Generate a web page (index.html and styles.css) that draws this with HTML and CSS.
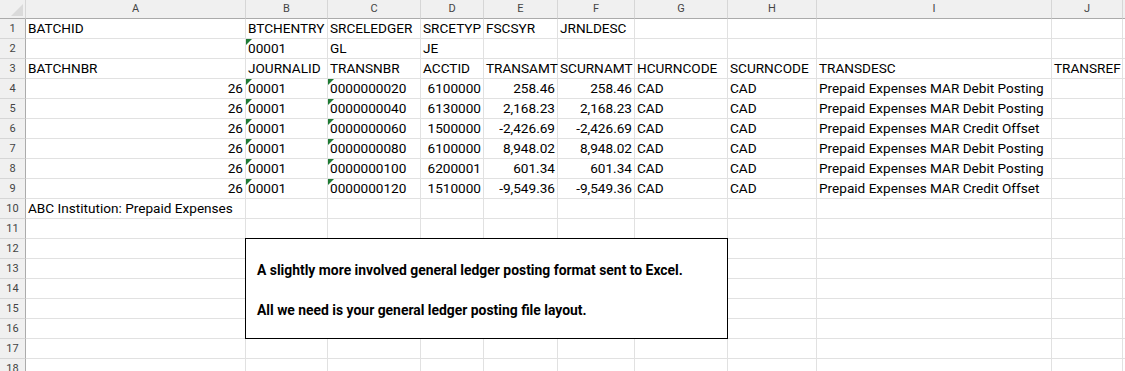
FILE: index.html
```html
<!DOCTYPE html>
<html>
<head>
<meta charset="utf-8">
<link rel="stylesheet" href="styles.css">
</head>
<body>
<div class="sheet">
  <div class="row hdr">
    <div class="corner"><span class="corner-tri"></span></div>
    <div class="ch">A</div><div class="ch">B</div><div class="ch">C</div><div class="ch">D</div><div class="ch">E</div><div class="ch">F</div><div class="ch">G</div><div class="ch">H</div><div class="ch">I</div><div class="ch">J</div><div class="ch"></div>
  </div>
  <div class="row">
    <div class="rh">1</div>
    <div class="c">BATCHID</div><div class="c">BTCHENTRY</div><div class="c">SRCELEDGER</div><div class="c">SRCETYP</div><div class="c">FSCSYR</div><div class="c">JRNLDESC</div><div class="c"></div><div class="c"></div><div class="c"></div><div class="c"></div><div class="c"></div>
  </div>
  <div class="row">
    <div class="rh">2</div>
    <div class="c"></div><div class="c tri">00001</div><div class="c">GL</div><div class="c">JE</div><div class="c"></div><div class="c"></div><div class="c"></div><div class="c"></div><div class="c"></div><div class="c"></div><div class="c"></div>
  </div>
  <div class="row">
    <div class="rh">3</div>
    <div class="c">BATCHNBR</div><div class="c">JOURNALID</div><div class="c">TRANSNBR</div><div class="c">ACCTID</div><div class="c">TRANSAMT</div><div class="c">SCURNAMT</div><div class="c">HCURNCODE</div><div class="c">SCURNCODE</div><div class="c">TRANSDESC</div><div class="c">TRANSREF</div><div class="c"></div>
  </div>
  <div class="row">
    <div class="rh">4</div>
    <div class="c r">26</div><div class="c tri">00001</div><div class="c tri">0000000020</div><div class="c r">6100000</div><div class="c r">258.46</div><div class="c r">258.46</div><div class="c">CAD</div><div class="c">CAD</div><div class="c">Prepaid Expenses MAR Debit Posting</div><div class="c"></div><div class="c"></div>
  </div>
  <div class="row">
    <div class="rh">5</div>
    <div class="c r">26</div><div class="c tri">00001</div><div class="c tri">0000000040</div><div class="c r">6130000</div><div class="c r">2,168.23</div><div class="c r">2,168.23</div><div class="c">CAD</div><div class="c">CAD</div><div class="c">Prepaid Expenses MAR Debit Posting</div><div class="c"></div><div class="c"></div>
  </div>
  <div class="row">
    <div class="rh">6</div>
    <div class="c r">26</div><div class="c tri">00001</div><div class="c tri">0000000060</div><div class="c r">1500000</div><div class="c r">-2,426.69</div><div class="c r">-2,426.69</div><div class="c">CAD</div><div class="c">CAD</div><div class="c">Prepaid Expenses MAR Credit Offset</div><div class="c"></div><div class="c"></div>
  </div>
  <div class="row">
    <div class="rh">7</div>
    <div class="c r">26</div><div class="c tri">00001</div><div class="c tri">0000000080</div><div class="c r">6100000</div><div class="c r">8,948.02</div><div class="c r">8,948.02</div><div class="c">CAD</div><div class="c">CAD</div><div class="c">Prepaid Expenses MAR Debit Posting</div><div class="c"></div><div class="c"></div>
  </div>
  <div class="row">
    <div class="rh">8</div>
    <div class="c r">26</div><div class="c tri">00001</div><div class="c tri">0000000100</div><div class="c r">6200001</div><div class="c r">601.34</div><div class="c r">601.34</div><div class="c">CAD</div><div class="c">CAD</div><div class="c">Prepaid Expenses MAR Debit Posting</div><div class="c"></div><div class="c"></div>
  </div>
  <div class="row">
    <div class="rh">9</div>
    <div class="c r">26</div><div class="c tri">00001</div><div class="c tri">0000000120</div><div class="c r">1510000</div><div class="c r">-9,549.36</div><div class="c r">-9,549.36</div><div class="c">CAD</div><div class="c">CAD</div><div class="c">Prepaid Expenses MAR Credit Offset</div><div class="c"></div><div class="c"></div>
  </div>
  <div class="row">
    <div class="rh">10</div>
    <div class="c">ABC Institution: Prepaid Expenses</div><div class="c"></div><div class="c"></div><div class="c"></div><div class="c"></div><div class="c"></div><div class="c"></div><div class="c"></div><div class="c"></div><div class="c"></div><div class="c"></div>
  </div>
  <div class="row">
    <div class="rh">11</div>
    <div class="c"></div><div class="c"></div><div class="c"></div><div class="c"></div><div class="c"></div><div class="c"></div><div class="c"></div><div class="c"></div><div class="c"></div><div class="c"></div><div class="c"></div>
  </div>
  <div class="row">
    <div class="rh">12</div>
    <div class="c"></div><div class="c"></div><div class="c"></div><div class="c"></div><div class="c"></div><div class="c"></div><div class="c"></div><div class="c"></div><div class="c"></div><div class="c"></div><div class="c"></div>
  </div>
  <div class="row">
    <div class="rh">13</div>
    <div class="c"></div><div class="c"></div><div class="c"></div><div class="c"></div><div class="c"></div><div class="c"></div><div class="c"></div><div class="c"></div><div class="c"></div><div class="c"></div><div class="c"></div>
  </div>
  <div class="row">
    <div class="rh">14</div>
    <div class="c"></div><div class="c"></div><div class="c"></div><div class="c"></div><div class="c"></div><div class="c"></div><div class="c"></div><div class="c"></div><div class="c"></div><div class="c"></div><div class="c"></div>
  </div>
  <div class="row">
    <div class="rh">15</div>
    <div class="c"></div><div class="c"></div><div class="c"></div><div class="c"></div><div class="c"></div><div class="c"></div><div class="c"></div><div class="c"></div><div class="c"></div><div class="c"></div><div class="c"></div>
  </div>
  <div class="row">
    <div class="rh">16</div>
    <div class="c"></div><div class="c"></div><div class="c"></div><div class="c"></div><div class="c"></div><div class="c"></div><div class="c"></div><div class="c"></div><div class="c"></div><div class="c"></div><div class="c"></div>
  </div>
  <div class="row">
    <div class="rh">17</div>
    <div class="c"></div><div class="c"></div><div class="c"></div><div class="c"></div><div class="c"></div><div class="c"></div><div class="c"></div><div class="c"></div><div class="c"></div><div class="c"></div><div class="c"></div>
  </div>
  <div class="row">
    <div class="rh">18</div>
    <div class="c"></div><div class="c"></div><div class="c"></div><div class="c"></div><div class="c"></div><div class="c"></div><div class="c"></div><div class="c"></div><div class="c"></div><div class="c"></div><div class="c"></div>
  </div>

  <div class="textbox">
    <p class="tb-line">A slightly more involved general ledger posting format sent to Excel.</p>
    <p class="tb-line">&nbsp;</p>
    <p class="tb-line">All we need is your general ledger posting file layout.</p>
  </div>
</div>
</body>
</html>
```

FILE: styles.css
```css
* {
  box-sizing: border-box;
  margin: 0;
  padding: 0;
}

html, body {
  margin: 0;
  background: #ffffff;
  overflow: hidden;
}

body {
  font-family: Roboto, "Liberation Sans", Arial, sans-serif;
  color: #000;
}

.sheet {
  position: relative;
  width: 1125px;
  height: 371px;
  overflow: hidden;
}

.row {
  display: grid;
  grid-template-columns: 26px 220px 82px 93px 63px 74px 77px 93px 89px 235px 71px 80px;
  height: 20px;
}

.row.hdr {
  height: 19px;
}

/* header cells */
.corner {
  position: relative;
  background: #f0f0f0;
  border-right: 1px solid #d6d6d6;
  border-bottom: 1px solid #ababab;
}

.corner-tri {
  position: absolute;
  right: 2px;
  bottom: 2px;
  width: 0;
  height: 0;
  border-left: 12px solid transparent;
  border-bottom: 12px solid #dadada;
}

.ch {
  background: #f0f0f0;
  border-right: 1px solid #d6d6d6;
  border-bottom: 1px solid #ababab;
  color: #444;
  font-size: 11px;
  line-height: 18px;
  text-align: center;
}

.rh {
  background: #f0f0f0;
  border-right: 1px solid #ababab;
  border-bottom: 1px solid #d6d6d6;
  color: #444;
  font-size: 11px;
  line-height: 19px;
  text-align: center;
}

/* data cells */
.c {
  position: relative;
  border-right: 1px solid #e1e1e1;
  border-bottom: 1px solid #e1e1e1;
  padding: 0 2px;
  font-size: 13.6px;
  line-height: 19px;
  white-space: nowrap;
}

.c.r {
  text-align: right;
}

.c.tri::before {
  content: "";
  position: absolute;
  left: 0;
  top: 0;
  width: 0;
  height: 0;
  border-top: 6px solid #1e7b34;
  border-right: 6px solid transparent;
}

/* floating text box */
.textbox {
  position: absolute;
  left: 245px;
  top: 238px;
  width: 483px;
  height: 101px;
  background: #fff;
  border: 1px solid #000;
  padding: 21px 0 0 11px;
}

.tb-line {
  font-size: 13.9px;
  font-weight: bold;
  line-height: 20px;
  white-space: nowrap;
}
```
